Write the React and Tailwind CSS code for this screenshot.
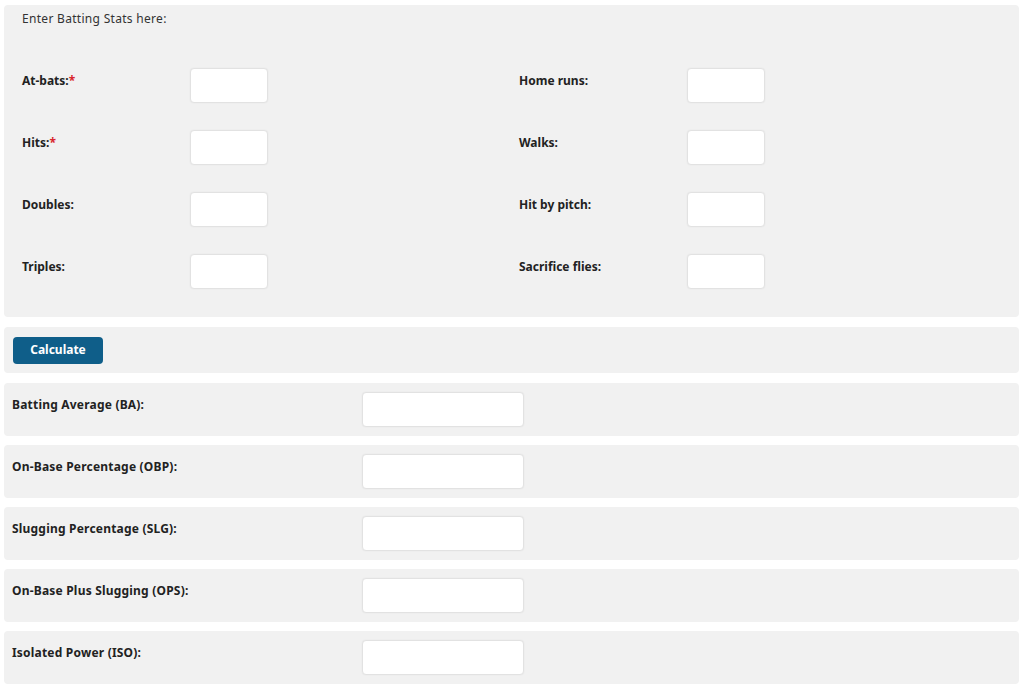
const battingLeft = [
  { label: 'At-bats:', required: true },
  { label: 'Hits:', required: true },
  { label: 'Doubles:' },
  { label: 'Triples:' },
];

const battingRight = [
  { label: 'Home runs:' },
  { label: 'Walks:' },
  { label: 'Hit by pitch:' },
  { label: 'Sacrifice flies:' },
];

const results = [
  'Batting Average (BA):',
  'On-Base Percentage (OBP):',
  'Slugging Percentage (SLG):',
  'On-Base Plus Slugging (OPS):',
  'Isolated Power (ISO):',
];

function StatField({ label, required }) {
  return (
    <div className="flex items-center h-[35px]">
      <span className="w-[168px] shrink-0 pb-[10px] text-[12px] font-bold text-[#222]">
        {label}
        {required && <span className="text-[#d9262c]">*</span>}
      </span>
      <input
        type="text"
        className="w-[78px] h-[35px] bg-white rounded-[4px] border border-[#e2e2e2] shadow-[0_0_2px_rgba(0,0,0,0.06)] outline-none"
      />
    </div>
  );
}

export default function App() {
  return (
    <div
      className="min-h-[691px] bg-white pt-[5px] pl-[4px] pr-[5px] flex flex-col gap-[10px]"
      style={{ fontFamily: '"Noto Sans", "DejaVu Sans", sans-serif' }}
    >
      {/* Input stats */}
      <div className="bg-[#f1f1f1] rounded-[4px] pt-[6px] pb-[28px] pl-[18px]">
        <p className="text-[12px] leading-[16px] text-[#333] tracking-[0.3px]">Enter Batting Stats here:</p>
        <div className="grid grid-cols-[497px_1fr] mt-[41px]">
          <div className="flex flex-col gap-[27px]">
            {battingLeft.map((f) => (
              <StatField key={f.label} {...f} />
            ))}
          </div>
          <div className="flex flex-col gap-[27px]">
            {battingRight.map((f) => (
              <StatField key={f.label} {...f} />
            ))}
          </div>
        </div>
      </div>

      {/* Action */}
      <div className="bg-[#f1f1f1] rounded-[4px] p-[9px]">
        <button className="w-[90px] h-[27px] rounded-[4px] bg-[#0f5e89] text-white text-[12px] font-bold">
          Calculate
        </button>
      </div>

      {/* Results */}
      <div className="flex flex-col gap-[9px]">
        {results.map((r) => (
          <div key={r} className="bg-[#f1f1f1] rounded-[4px] h-[53px] flex items-center pl-[8px]">
            <span className="w-[350px] shrink-0 pb-[8px] text-[12px] font-bold text-[#222] tracking-[0.2px]">{r}</span>
            <input
              type="text"
              readOnly
              className="w-[162px] h-[35px] bg-white rounded-[4px] border border-[#e2e2e2] shadow-[0_0_2px_rgba(0,0,0,0.06)] outline-none"
            />
          </div>
        ))}
      </div>
    </div>
  );
}
